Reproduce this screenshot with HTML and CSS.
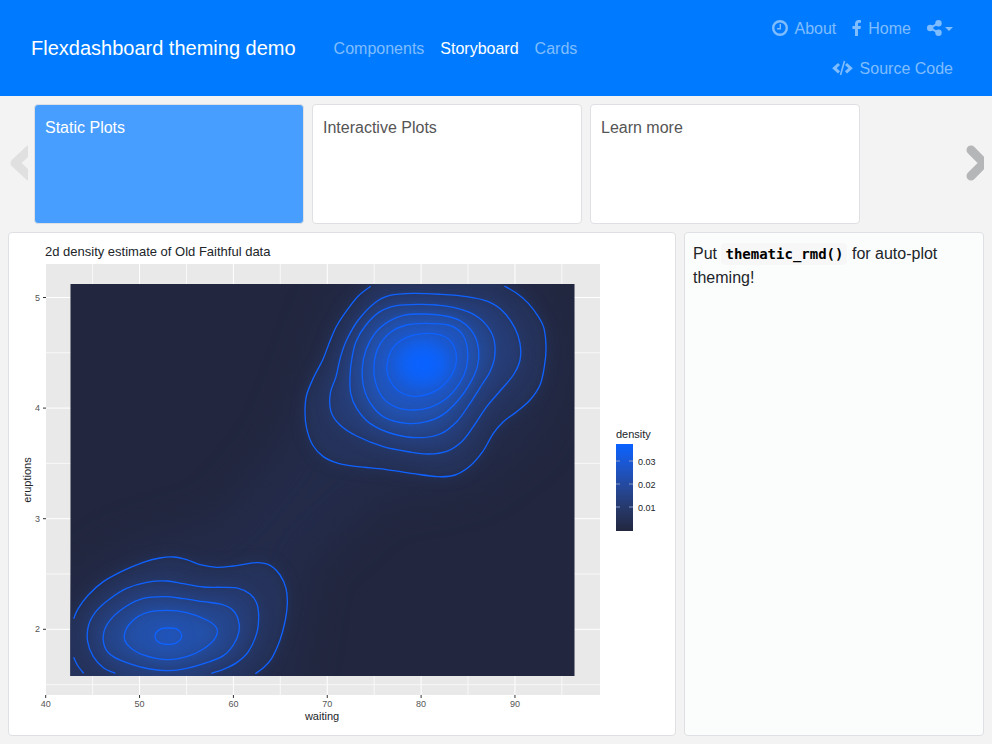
FILE: index.html
```html
<!DOCTYPE html>
<html lang="en">
<head>
<meta charset="utf-8">
<meta name="viewport" content="width=device-width, initial-scale=1">
<title>Flexdashboard theming demo</title>
<link rel="stylesheet" href="styles.css">
</head>
<body>
<header class="navbar">
  <a class="brand" href="#">Flexdashboard theming demo</a>
  <nav class="nav pages" aria-label="Pages">
    <a class="nav-link" href="#components">Components</a>
    <a class="nav-link active" href="#storyboard" aria-current="page">Storyboard</a>
    <a class="nav-link" href="#cards">Cards</a>
  </nav>
  <nav class="nav tools" aria-label="Tools">
    <a class="nav-link" href="#about">
      <svg class="icon clock" viewBox="0 0 16 16" aria-hidden="true"><circle cx="8" cy="8" r="6.800" fill="none" stroke="currentColor" stroke-width="2.400"/><path d="M8.300 4v4.700H5" fill="none" stroke="currentColor" stroke-width="1.400"/></svg>About</a>
    <a class="nav-link" href="#home">
      <svg class="icon facebook" viewBox="0 0 9 16" aria-hidden="true"><path d="M9 .2v2.600H7.400C6.200 2.800 6 3.400 6 4.200V6h2.900l-.4 2.900H6V16H3V8.900H.5V6H3V3.900C3 1.400 4.500 0 6.700 0 7.800 0 8.700.1 9 .2z" fill="currentColor"/></svg>Home</a>
    <button class="nav-link share" type="button" aria-label="Share">
      <svg class="icon share-icon" viewBox="0 0 15 16" aria-hidden="true"><g fill="currentColor"><circle cx="3.200" cy="8" r="3.200"/><circle cx="11.500" cy="3.200" r="3.200"/><circle cx="11.500" cy="12.800" r="3.200"/></g><path d="M11.500 3.200 3.200 8l8.300 4.800" fill="none" stroke="currentColor" stroke-width="2"/></svg><span class="caret"></span></button>
    <a class="nav-link" href="#source">
      <svg class="icon code-icon" viewBox="0 0 21 16" aria-hidden="true"><g fill="none" stroke="currentColor"><path d="M7 4 2.400 8.200 7 12.400M14 4l4.600 4.200L14 12.400" stroke-width="3"/><path d="M12.500 1 8.500 15" stroke-width="1.600"/></g></svg>Source Code</a>
  </nav>
</header>

<main class="storyboard">
  <div class="frames">
    <button class="arrow previous" type="button" aria-label="Previous" disabled>
      <svg viewBox="0 0 18 36" aria-hidden="true"><path d="M19 5 5 18l14 13" /></svg>
    </button>
    <div class="frame-list">
      <button class="frame selected" type="button">Static Plots</button>
      <button class="frame" type="button">Interactive Plots</button>
      <button class="frame" type="button">Learn more</button>
    </div>
    <button class="arrow next" type="button" aria-label="Next">
      <svg viewBox="0 0 18 36" aria-hidden="true"><path d="M5 5l13 13L5 31"/></svg>
    </button>
  </div>

  <div class="content">
    <section class="card plot-card">
      <svg class="plot" viewBox="0 0 666 502" preserveAspectRatio="none" role="img" aria-label="2d density estimate of Old Faithful data">
        <defs>
          <clipPath id="raster-clip"><rect x="61.500" y="51" width="504" height="392"/></clipPath>
          <filter id="soft" filterUnits="userSpaceOnUse" x="-200" y="-200" width="2200" height="1800" color-interpolation-filters="sRGB"><feGaussianBlur stdDeviation="19"/></filter>
          <filter id="wide" filterUnits="userSpaceOnUse" x="-200" y="-200" width="1100" height="900" color-interpolation-filters="sRGB"><feGaussianBlur stdDeviation="20"/></filter>
          <linearGradient id="scale" x1="0" y1="1" x2="0" y2="0">
            <stop offset="0" stop-color="#22273f"/><stop offset=".25" stop-color="#263868"/><stop offset=".5" stop-color="#254899"/><stop offset=".75" stop-color="#1c56cd"/><stop offset="1" stop-color="#0a62ff"/>
          </linearGradient>
        </defs>
        <rect class="panel" x="37" y="31" width="554" height="431"/>
        <g id="grid"></g>
        <rect class="raster" x="61.500" y="51" width="504" height="392"/>
        <g clip-path="url(#raster-clip)">
          <g filter="url(#wide)" fill="#232b4a">
            <path d="M270 220 295 160 320 90 350 30H520L550 140 520 205 460 250 370 265 300 330 280 465H40V370L120 315 210 290Z"/>
          </g>
          <g id="density"></g>
        </g>
        <g id="contours"></g>
        <g id="axes" class="tick-labels"></g>
        <text class="plot-title" x="36" y="23">2d density estimate of Old Faithful data</text>
        <text class="axis-title" x="313" y="487" text-anchor="middle">waiting</text>
        <text class="axis-title" transform="translate(22 247) rotate(-90)" text-anchor="middle">eruptions</text>
        <text class="axis-title" x="607" y="205">density</text>
        <rect x="607" y="211" width="17" height="87" fill="url(#scale)"/>
        <path class="legend-ticks" d="M607 228h4m9 0h4M607 251h4m9 0h4M607 274h4m9 0h4"/>
        <g class="tick-labels legend-labels">
          <text x="629" y="232">0.03</text><text x="629" y="255">0.02</text><text x="629" y="278">0.01</text>
        </g>
      </svg>
    </section>
    <section class="card commentary">
      <p>Put <code>thematic_rmd()</code> for auto-plot theming!</p>
    </section>
  </div>
</main>
<script src="plot.js"></script>
</body>
</html>
```

FILE: plot.js
```js
const NS = "http://www.w3.org/2000/svg";

function add(parent, name, attrs, text) {
  const el = document.createElementNS(NS, name);
  for (const key in attrs) el.setAttribute(key, attrs[key]);
  if (text) el.textContent = text;
  parent.appendChild(el);
  return el;
}

// Smooth curve through a flat list of x, y values (Catmull-Rom to Bezier).
function curve(flat, closed) {
  const p = [];
  for (let i = 0; i < flat.length; i += 2) p.push([flat[i], flat[i + 1]]);
  const n = p.length;
  const at = i => closed ? p[(i + n) % n] : p[Math.max(0, Math.min(n - 1, i))];
  let d = "M" + p[0];
  for (let i = 0; i < (closed ? n : n - 1); i++) {
    const [a, b, c, e] = [at(i - 1), at(i), at(i + 1), at(i + 2)];
    d += "C" + [b[0] + (c[0] - a[0]) / 6, b[1] + (c[1] - a[1]) / 6,
      c[0] - (e[0] - b[0]) / 6, c[1] - (e[1] - b[1]) / 6, c[0], c[1]];
  }
  return d + (closed ? "Z" : "");
}

function ring(cx, cy, rx, ry) {
  const pts = [];
  for (let i = 0; i < 12; i++) {
    const a = i * Math.PI / 6;
    pts.push(cx + rx * Math.cos(a), cy + ry * Math.sin(a));
  }
  return pts;
}

const clusters = [
  {
    transform: "translate(281 27) scale(.33333)",
    levels: [
      { open: true, edge: "L643 -50L242 -50Z", points: [242,79,205,108,170,152,140,198,120,243,98,300,72,350,50,405,45,455,50,505,68,555,100,590,145,610,205,620,285,628,370,641,445,650,495,645,540,618,578,575,610,520,640,485,680,455,720,420,750,375,763,320,768,265,762,205,745,170,715,130,680,100,643,78] },
      { points: [370,100,300,106,255,128,205,180,170,240,152,290,138,350,121,400,123,455,150,495,200,528,280,560,360,576,415,582,470,574,515,545,550,500,590,440,630,393,670,345,690,300,690,250,675,205,640,155,595,125,530,110,450,103] },
      { points: [390,133,320,137,270,155,228,195,198,245,185,300,180,350,182,400,200,445,240,490,310,522,385,533,450,522,500,485,540,430,575,375,600,335,614,290,611,235,585,190,545,160,490,142,440,135] },
      { points: [400,162,340,166,295,185,255,220,228,270,217,325,222,385,245,435,285,473,350,490,410,485,460,463,505,420,540,370,562,320,566,270,550,220,510,182,460,167] },
      { points: [405,190,350,195,300,218,265,262,252,315,256,365,280,415,320,442,370,450,420,442,470,415,510,368,530,320,532,265,515,220,475,195] },
      { points: [410,220,350,232,308,265,291,315,297,355,325,392,370,409,415,402,455,380,485,345,499,300,490,255,460,228] },
      { points: ring(398, 312, 83, 73) },
      { points: ring(398, 312, 66, 56) },
      { points: ring(400, 312, 46, 38) }
    ]
  },
  {
    transform: "translate(-9 267) scale(.33333)",
    levels: [
      { open: true, edge: "L766 620L130 620L130 356Z", points: [221,356,235,325,265,285,310,245,370,212,430,187,480,174,520,171,560,179,600,194,650,202,700,198,770,188,810,196,840,225,858,265,862,310,856,360,840,420,815,475,790,503,766,521] },
      { open: true, edge: "L634 600L346 600Z", points: [346,520,310,503,280,470,263,425,266,375,290,332,330,296,380,265,440,247,500,243,550,251,610,261,665,262,715,265,750,282,770,310,776,350,770,400,745,455,710,488,670,508,634,520] },
      { points: [495,290,430,295,380,318,335,355,312,395,314,440,340,470,395,493,450,507,505,512,560,505,620,488,670,467,700,435,717,395,715,360,698,330,665,313,610,305,550,296] },
      { points: [500,331,440,338,395,365,373,405,385,437,430,465,500,479,560,470,610,447,645,415,650,385,620,360,560,338] },
      { points: [505,384,480,388,465,408,478,428,505,433,530,428,545,408,532,388] }
    ]
  }
];
const fills = ["#25335c", "#263c74", "#25468d", "#2350a9", "#2055be", "#1b5ad2", "#165fe4", "#0f61f3", "#0a62ff"];

for (const cluster of clusters) {
  const fillGroup = add(document.getElementById("density"), "g", { transform: cluster.transform });
  const lineGroup = add(document.getElementById("contours"), "g", { transform: cluster.transform });
  cluster.levels.forEach((level, i) => {
    const d = curve(level.points, !level.open);
    add(fillGroup, "path", { d: d + (level.edge || ""), fill: fills[i], filter: "url(#soft)" });
    if (i < 6) add(lineGroup, "path", { d, class: "contour" });
  });
}
add(document.getElementById("contours"), "path", {
  d: curve([221,472,232,495,251,520]), class: "contour", transform: clusters[1].transform
});

const grid = document.getElementById("grid");
const axes = document.getElementById("axes");
for (let v = 40; v <= 95; v += 5) {
  const x = 36.7 + (v - 40) * 9.385;
  const major = v % 10 === 0;
  if (v > 40) add(grid, "path", { d: `M${x} 31V462`, class: major ? "major" : "minor" });
  if (major) {
    add(axes, "path", { d: `M${x} 462v3` });
    add(axes, "text", { x, y: 474, "text-anchor": "middle" }, String(v));
  }
}
for (let v = 1.5; v <= 5; v += .5) {
  const y = 64.5 + (5 - v) * 110.6;
  const major = v % 1 === 0;
  add(grid, "path", { d: `M37 ${y}H591`, class: major ? "major" : "minor" });
  if (major) {
    add(axes, "path", { d: `M34 ${y}h3` });
    add(axes, "text", { x: 31, y: y + 3, "text-anchor": "end" }, String(v));
  }
}
```

FILE: styles.css
```css
* { box-sizing: border-box; }

body {
  margin: 0;
  min-height: 100vh;
  display: flex;
  flex-direction: column;
  background: #f3f3f3;
  color: #212529;
  font: 16px/24px "Liberation Sans", Arial, sans-serif;
}

button { font: inherit; cursor: pointer; }
a { text-decoration: none; }

.navbar {
  display: flex;
  align-items: center;
  padding: 8px 31px;
  background: #007bff;
}

.brand {
  margin-right: 30px;
  color: #fff;
  font-size: 20px;
  line-height: 30px;
  white-space: nowrap;
}

.nav { display: flex; }

.tools {
  width: 200px;
  margin-left: auto;
  flex-wrap: wrap;
  justify-content: flex-end;
}

.nav-link {
  display: flex;
  align-items: center;
  padding: 9px 8px 7px;
  border: 0;
  background: none;
  color: #80bdff;
  white-space: nowrap;
}

.nav-link.active { color: #fff; }

.icon { height: 16px; margin-right: 7px; margin-bottom: 3px; }
.clock { width: 16px; }
.facebook { width: 9px; }
.share-icon { width: 15px; margin-right: 3px; }
.code-icon { width: 21px; }

.caret {
  border: 4px solid transparent;
  border-top-color: currentColor;
  border-bottom: 0;
}

.storyboard {
  flex: 1;
  display: flex;
  flex-direction: column;
  gap: 8px;
  padding: 8px;
}

.frames {
  display: flex;
  align-items: stretch;
  height: 120px;
}

.arrow {
  display: flex;
  align-items: center;
  padding: 0;
  border: 0;
  background: none;
  color: #b5b6b8;
}

.arrow svg { width: 18px; height: 36px; margin-bottom: 2px; }
.arrow path { fill: none; stroke: currentColor; stroke-width: 9; stroke-linecap: round; stroke-linejoin: round; }
.previous { padding: 0 6px 0 2px; color: #e0e0e0; }

.frame-list { flex: 1; display: flex; gap: 8px; }

.frame {
  flex: 0 0 270px;
  display: flex;
  align-items: flex-start;
  padding: 11px 10px;
  border: 1px solid #dfe0e3;
  border-radius: 4px;
  background: #fff;
  color: #555;
  text-align: left;
}

.frame.selected { background: #489eff; color: #fff; }

.content { flex: 1; display: flex; gap: 8px; }

.card {
  border: 1px solid #dee0e3;
  border-radius: 4px;
  background: #fff;
}

.plot-card { flex: 1; display: flex; min-width: 0; }
.commentary { flex: 0 0 300px; padding: 9px 8px; background: #fbfdfd; }
.commentary p { margin: 0; }

code {
  padding: 3px 4px;
  border-radius: 4px;
  background: #f7f7f7;
  color: #000;
  font: bold 14px/20px "DejaVu Sans Mono", monospace;
}

.plot { display: block; width: 100%; height: 100%; font-family: "Liberation Sans", Arial, sans-serif; }
.panel { fill: #e9e9e9; }
.raster { fill: #22273f; }
.major { stroke: #fff; stroke-width: 1; }
.minor { stroke: #f8f8f8; stroke-width: 1; }
.contour { fill: none; stroke: #0f62ff; stroke-width: 4; }
.plot-title { font-size: 13px; fill: #212529; }
.axis-title { font-size: 11px; fill: #212529; }
.tick-labels { font-size: 9px; fill: #555; }
.tick-labels path { stroke: #333; }
.legend-labels { fill: #212529; }
.legend-ticks { fill: none; stroke: #8799c8; }
```
